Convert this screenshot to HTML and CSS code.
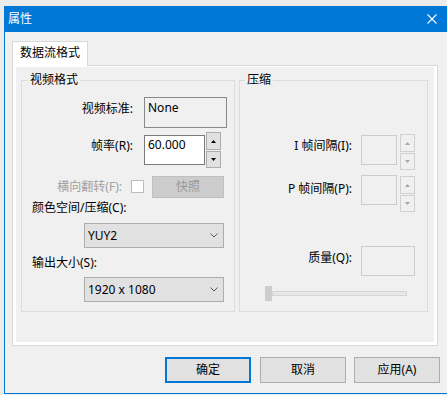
FILE: index.html
```html
<!DOCTYPE html>
<html lang="zh-CN">
<head>
<meta charset="utf-8">
<title>属性</title>
<link rel="stylesheet" href="styles.css">
</head>
<body>
<div class="window">
  <div class="titlebar">
    <span class="title">属性</span>
    <svg class="close" width="10" height="10" viewBox="0 0 10 10"><path d="M0.5 0.5 L9.5 9.5 M9.5 0.5 L0.5 9.5" stroke="#fff" stroke-width="1.1" fill="none"/></svg>
  </div>
  <div class="client">
    <div class="tab">数据流格式</div>
    <div class="panel">
      <div class="page">
        <fieldset class="group left">
          <legend>视频格式</legend>
          <div class="row r1">
            <div class="lbl w111 p5">视频标准:</div>
            <div class="static">None</div>
          </div>
          <div class="row r2">
            <div class="lbl w111 m7">帧率(R):</div>
            <div class="edit">60.000</div>
            <div class="spin">
              <div class="sbtn up"><svg width="5" height="3" viewBox="0 0 5 3"><polygon points="0,3 2.5,0 5,3"/></svg></div>
              <div class="sbtn down"><svg width="5" height="3" viewBox="0 0 5 3"><polygon points="0,0 2.5,3 5,0"/></svg></div>
            </div>
          </div>
          <div class="row r3">
            <div class="lbl w100 p4 gray">横向翻转(F):</div>
            <div class="check"></div>
            <div class="btn-off">快照</div>
          </div>
          <div class="text r4">颜色空间/压缩(C):</div>
          <div class="combo r5"><span>YUY2</span><svg width="8" height="5" viewBox="0 0 8 5"><polyline points="0.5,0.5 4,4 7.5,0.5" fill="none" stroke="#555" stroke-width="1"/></svg></div>
          <div class="text r6">输出大小(S):</div>
          <div class="combo r7"><span>1920 x 1080</span><svg width="8" height="5" viewBox="0 0 8 5"><polyline points="0.5,0.5 4,4 7.5,0.5" fill="none" stroke="#555" stroke-width="1"/></svg></div>
        </fieldset>
        <fieldset class="group right">
          <legend>压缩</legend>
          <div class="row ra">
            <div class="lbl w112 m5">I 帧间隔(I):</div>
            <div class="dbox narrow ma1"></div>
            <div class="spin off">
              <div class="sbtn up"><svg width="5" height="3" viewBox="0 0 5 3"><polygon points="0,3 2.5,0 5,3"/></svg></div>
              <div class="sbtn down"><svg width="5" height="3" viewBox="0 0 5 3"><polygon points="0,0 2.5,3 5,0"/></svg></div>
            </div>
          </div>
          <div class="row rb">
            <div class="lbl w112 m7">P 帧间隔(P):</div>
            <div class="dbox narrow"></div>
            <div class="spin off ma1">
              <div class="sbtn up"><svg width="5" height="3" viewBox="0 0 5 3"><polygon points="0,3 2.5,0 5,3"/></svg></div>
              <div class="sbtn down"><svg width="5" height="3" viewBox="0 0 5 3"><polygon points="0,0 2.5,3 5,0"/></svg></div>
            </div>
          </div>
          <div class="row rc">
            <div class="lbl w112 m5">质量(Q):</div>
            <div class="dbox wide"></div>
          </div>
          <div class="slider">
            <div class="thumb"></div>
            <div class="track"></div>
          </div>
        </fieldset>
      </div>
    </div>
    <div class="buttons">
      <div class="btn default">确定</div>
      <div class="btn cancel">取消</div>
      <div class="btn">应用(A)</div>
    </div>
  </div>
</div>
</body>
</html>
```
FILE: styles.css
```css
* { box-sizing: border-box; }
body {
  margin: 0;
  background: #ebebeb;
  font-family: "Noto Sans", "Noto Sans CJK SC", sans-serif;
  font-size: 12px;
  color: #000;
  line-height: 14px;
}
.window {
  margin: 6px 0 0 4px;
  width: 443px;
  height: 388px;
  border-left: 1px solid #0078d7;
  border-bottom: 1px solid #0078d7;
  background: #f0f0f0;
  display: flex;
  flex-direction: column;
}
.titlebar {
  height: 26px;
  flex: none;
  background: #0078d7;
  color: #fff;
  display: flex;
  align-items: center;
  justify-content: space-between;
  padding: 0 10px 0 3px;
}
.close { display: block; }
.client {
  flex: 1;
  padding: 9px 0 0 7px;
}
.tab {
  width: 76px;
  height: 25px;
  border: 1px solid #d9d9d9;
  border-bottom: 0;
  background: #fff;
  margin-bottom: -1px;
  position: relative;
  z-index: 1;
  text-align: center;
  line-height: 22px;
}
.panel {
  width: 426px;
  height: 281px;
  border: 1px solid #d9d9d9;
  background: #fff;
  padding: 1px 3px 3px 3px;
}
.page {
  height: 100%;
  background: #f0f0f0;
  display: flex;
  gap: 4px;
  align-items: flex-start;
  padding: 6px 0 0 5px;
}
.group {
  margin: 0;
  padding: 0;
  min-width: 0;
  border: 1px solid #dcdcdc;
  height: 239px;
}
.group.left { width: 214px; }
.group.right { width: 189px; }
.group legend {
  padding: 0 2px;
  margin-left: 6px;
  line-height: 14px;
}
.group.right legend { margin-left: 5px; }

.row { display: flex; align-items: flex-start; }
.lbl { text-align: right; flex: none; }
.w111 { width: 111px; }
.w100 { width: 100px; }
.w112 { width: 112px; }
.p5 { padding-top: 5px; }
.p4 { padding-top: 4px; }
.m7 { margin-top: 7px; }
.m5 { margin-top: 5px; }
.gray { color: #a0a0a0; }

.r1 { margin-top: 10px; }
.static {
  margin-left: 11px;
  width: 83px;
  height: 31px;
  border: 1px solid #8a8a8a;
  padding: 3px 0 0 3px;
}
.r2 { margin-top: 4px; }
.edit {
  margin: 3px 0 0 11px;
  width: 61px;
  height: 30px;
  border: 1px solid #7a7a7a;
  background: #fff;
  padding: 2px 0 0 3px;
}
.spin {
  width: 15px;
  margin-left: 1px;
  display: flex;
  flex-direction: column;
  gap: 1px;
}
.sbtn {
  border: 1px solid #adadad;
  background: #e1e1e1;
  display: flex;
  align-items: center;
  justify-content: center;
  fill: #000;
}
.sbtn svg { display: block; }
.sbtn.up { height: 18px; }
.sbtn.down { height: 17px; }
.spin.off { margin-left: 3px; }
.spin.off .sbtn {
  border-color: #d0d0d0;
  background: #f0f0f0;
  fill: #a6a6a6;
}
.r3 { margin-top: 8px; }
.check {
  margin: 4px 0 0 9px;
  width: 13px;
  height: 13px;
  border: 1px solid #bcbcbc;
  background: #fff;
}
.btn-off {
  margin-left: 8px;
  width: 72px;
  height: 22px;
  border: 1px solid #bfbfbf;
  background: #cccccc;
  color: #9a9a9a;
  text-align: center;
  line-height: 20px;
}
.text { padding-left: 10px; }
.r4 { margin-top: 3px; }
.combo {
  margin-left: 62px;
  width: 140px;
  height: 25px;
  border: 1px solid #adadad;
  background: #e1e1e1;
  display: flex;
  align-items: center;
  justify-content: space-between;
  padding: 0 5px 0 3px;
}
.combo svg { display: block; }
.r5 { margin-top: 8px; }
.r6 { margin-top: 8px; }
.r7 { margin-top: 7px; }

.ra { margin-top: 47px; }
.rb { margin-top: 5px; }
.rc { margin-top: 34px; }
.dbox {
  margin-left: 9px;
  height: 30px;
  border: 1px solid #cccccc;
  background: #f0f0f0;
}
.dbox.narrow { width: 36px; }
.dbox.wide { width: 54px; }
.ma1 { margin-top: 1px; }
.slider {
  margin: 10px 0 0 25px;
  width: 142px;
  height: 15px;
  display: flex;
  align-items: center;
}
.thumb {
  width: 7px;
  height: 15px;
  background: #cdcdcd;
  flex: none;
}
.track {
  flex: 1;
  height: 5px;
  border: 1px solid #d6d6d6;
  background: #e7e7e7;
}
.buttons {
  display: flex;
  margin: 11px 0 0 153px;
}
.btn {
  width: 86px;
  height: 26px;
  border: 1px solid #adadad;
  background: #e1e1e1;
  text-align: center;
  line-height: 24px;
}
.btn.default {
  border: 2px solid #0078d7;
  line-height: 22px;
  margin-right: 9px;
}
.btn.cancel { margin-right: 8px; }
```
